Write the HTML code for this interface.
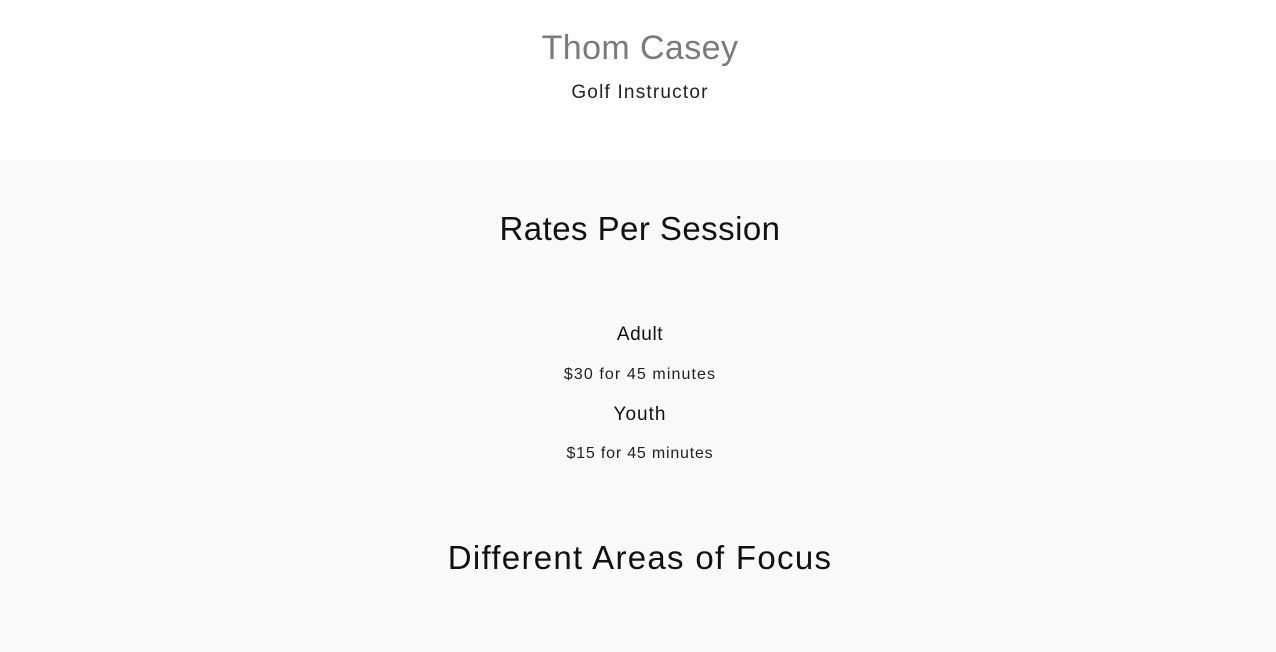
<!DOCTYPE html>
<html><head><meta charset="utf-8"><style>
html,body{margin:0;padding:0;width:1276px;height:652px;overflow:hidden;background:#fff;font-family:"Liberation Sans",sans-serif;}
.top{height:160px;background:#fff;position:relative;}
.grey{position:absolute;top:160px;left:0;width:1276px;height:492px;background:#f9f9f9;}
.t{position:absolute;left:2px;width:1276px;text-align:center;white-space:nowrap;}
</style></head><body>
<div class="top">
<div class="t" style="top:29px;font-size:34px;color:#7a7a7a;letter-spacing:0.4px;">Thom Casey</div>
<div class="t" style="top:82px;font-size:19px;color:#222;letter-spacing:1.2px;">Golf Instructor</div>
</div>
<div class="grey">
<div class="t" style="top:50px;font-size:33px;color:#111;letter-spacing:0.45px;">Rates Per Session</div>
<div class="t" style="top:164px;font-size:19px;color:#111;letter-spacing:0.6px;">Adult</div>
<div class="t" style="top:206px;font-size:16px;color:#222;letter-spacing:1.1px;">$30 for 45 minutes</div>
<div class="t" style="top:244px;font-size:19px;color:#111;letter-spacing:1px;">Youth</div>
<div class="t" style="top:285px;font-size:16px;color:#222;letter-spacing:0.8px;">$15 for 45 minutes</div>
<div class="t" style="top:379px;font-size:33px;color:#111;letter-spacing:1.3px;">Different Areas of Focus</div>
</div>
</body></html>
